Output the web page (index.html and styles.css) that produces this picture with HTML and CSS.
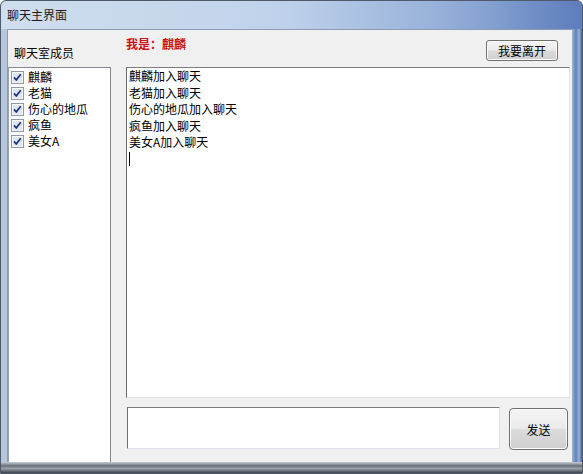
FILE: index.html
```html
<!DOCTYPE html>
<html>
<head>
<meta charset="utf-8">
<link rel="stylesheet" href="styles.css">
</head>
<body>
<div class="window">
  <div class="titlebar">聊天主界面</div>
  <div class="frame-row">
    <div class="frame-left"></div>
    <div class="client">
      <div class="left-col">
        <div class="members-label">聊天室成员</div>
        <div class="member-list">
          <div class="member"><span class="check"><svg width="13" height="13" viewBox="0 0 13 13"><rect x="0.5" y="0.5" width="12" height="12" fill="#f4f6f9" stroke="#8e98a6"/><rect x="2" y="2" width="9" height="9" fill="#dfe6ef"/><path d="M3 6.3 L5.3 8.8 L9.8 3.2" fill="none" stroke="#22377a" stroke-width="1.8"/></svg></span><span>麒麟</span></div>
          <div class="member"><span class="check"><svg width="13" height="13" viewBox="0 0 13 13"><rect x="0.5" y="0.5" width="12" height="12" fill="#f4f6f9" stroke="#8e98a6"/><rect x="2" y="2" width="9" height="9" fill="#dfe6ef"/><path d="M3 6.3 L5.3 8.8 L9.8 3.2" fill="none" stroke="#22377a" stroke-width="1.8"/></svg></span><span>老猫</span></div>
          <div class="member"><span class="check"><svg width="13" height="13" viewBox="0 0 13 13"><rect x="0.5" y="0.5" width="12" height="12" fill="#f4f6f9" stroke="#8e98a6"/><rect x="2" y="2" width="9" height="9" fill="#dfe6ef"/><path d="M3 6.3 L5.3 8.8 L9.8 3.2" fill="none" stroke="#22377a" stroke-width="1.8"/></svg></span><span>伤心的地瓜</span></div>
          <div class="member"><span class="check"><svg width="13" height="13" viewBox="0 0 13 13"><rect x="0.5" y="0.5" width="12" height="12" fill="#f4f6f9" stroke="#8e98a6"/><rect x="2" y="2" width="9" height="9" fill="#dfe6ef"/><path d="M3 6.3 L5.3 8.8 L9.8 3.2" fill="none" stroke="#22377a" stroke-width="1.8"/></svg></span><span>疯鱼</span></div>
          <div class="member"><span class="check"><svg width="13" height="13" viewBox="0 0 13 13"><rect x="0.5" y="0.5" width="12" height="12" fill="#f4f6f9" stroke="#8e98a6"/><rect x="2" y="2" width="9" height="9" fill="#dfe6ef"/><path d="M3 6.3 L5.3 8.8 L9.8 3.2" fill="none" stroke="#22377a" stroke-width="1.8"/></svg></span><span>美女A</span></div>
        </div>
      </div>
      <div class="right-col">
        <div class="header">
          <div class="me">我是：麒麟</div>
          <button class="btn leave">我要离开</button>
        </div>
        <div class="chat">
          <div class="line">麒麟加入聊天</div>
          <div class="line">老猫加入聊天</div>
          <div class="line">伤心的地瓜加入聊天</div>
          <div class="line">疯鱼加入聊天</div>
          <div class="line">美女A加入聊天</div>
          <div class="line"><span class="caret"></span></div>
        </div>
        <div class="footer">
          <div class="input"></div>
          <button class="btn send">发送</button>
        </div>
      </div>
    </div>
    <div class="frame-right"></div>
  </div>
  <div class="frame-bottom"></div>
</div>
</body>
</html>
```
FILE: styles.css
```css
html, body {
  margin: 0;
  padding: 0;
  background: #ffffff;
}
body {
  width: 583px;
  height: 474px;
  overflow: hidden;
  font-family: "Noto Sans CJK SC", "Noto Sans", sans-serif;
  font-size: 12px;
  color: #000;
}
.window {
  width: 583px;
  height: 474px;
  display: flex;
  flex-direction: column;
  background: linear-gradient(to right, #b7c7db 0%, #c3d3e8 40%, #a9c0e0 75%, #6f8fc4 100%);
  box-sizing: border-box;
  border: 1px solid #4e5a6a;
  border-radius: 6px 6px 0 0;
}
.titlebar {
  height: 28px;
  line-height: 27px;
  padding-left: 6px;
  font-size: 12px;
  color: #1b1b1b;
  background: linear-gradient(to right, rgba(210,225,242,0.9) 0%, rgba(190,210,236,0.6) 50%, rgba(120,150,205,0.6) 85%, rgba(90,120,185,0.8) 100%);
  border-radius: 6px 6px 0 0;
}
.frame-row {
  flex: 1;
  display: flex;
}
.frame-left {
  width: 6px;
}
.frame-right {
  width: 10px;
  background: linear-gradient(to right, #9eb4d6, #5f7fb7 40%, #9ab2d9 70%, #4a5f86);
}
.frame-bottom {
  height: 11px;
  background: linear-gradient(to bottom, #c9cfd6 0%, #6a717a 35%, #9aa1a9 60%, #3d434b 100%);
}
.client {
  width: 565px;
  background: #f0f0f0;
  display: flex;
  border-top: 1px solid #8b9cb3;
  border-left: 1px solid #8b9cb3;
  box-sizing: border-box;
}
.left-col {
  width: 103px;
  display: flex;
  flex-direction: column;
}
.members-label {
  height: 37px;
  box-sizing: border-box;
  padding-top: 15px;
  padding-left: 6px;
  line-height: 16px;
}
.member-list {
  flex: 1;
  background: #ffffff;
  border: 1px solid #828790;
  border-left-color: #9aa2ad;
  border-bottom: none;
  padding-top: 1px;
}
.member {
  height: 16px;
  display: flex;
  align-items: center;
  gap: 4px;
  padding-left: 2px;
  line-height: 16px;
}
.check {
  width: 13px;
  height: 13px;
  display: flex;
}
.right-col {
  margin-left: 15px;
  width: 444px;
  display: flex;
  flex-direction: column;
}
.header {
  height: 37px;
  position: relative;
  display: flex;
  justify-content: space-between;
  align-items: flex-start;
}
.me {
  padding-top: 6px;
  color: #cc1111;
  font-weight: bold;
  font-size: 12px;
  line-height: 16px;
}
.btn {
  font-family: "Noto Sans CJK SC", "Noto Sans", sans-serif;
  font-size: 12px;
  color: #000;
  border: 1px solid #707070;
  border-radius: 3px;
  background: linear-gradient(to bottom, #f4f4f4 0%, #ebebeb 48%, #dbdbdb 52%, #cfcfcf 100%);
  box-shadow: inset 0 0 0 1px #fcfcfc;
  padding: 0;
  margin: 0;
}
.leave {
  margin-top: 10px;
  margin-right: 12px;
  width: 72px;
  height: 21px;
  line-height: 18px;
}
.chat {
  height: 331px;
  box-sizing: border-box;
  background: #ffffff;
  border: 1px solid #e2e3ea;
  border-left-color: #6b6b6b;
  border-top-color: #7c7c7c;
  padding: 0 2px;
}
.line {
  height: 16.5px;
  line-height: 16.5px;
  white-space: nowrap;
}
.caret {
  display: inline-block;
  width: 1px;
  height: 14px;
  background: #000;
  vertical-align: -2px;
}
.footer {
  margin-top: 9px;
  display: flex;
  align-items: flex-start;
}
.input {
  margin-left: 1px;
  width: 373px;
  height: 42px;
  box-sizing: border-box;
  background: #ffffff;
  border: 1px solid #e2e3ea;
  border-left-color: #707070;
  border-top-color: #7c7c7c;
}
.send {
  margin-left: 9px;
  margin-top: 1px;
  width: 59px;
  height: 42px;
  border-radius: 4px;
}
```
